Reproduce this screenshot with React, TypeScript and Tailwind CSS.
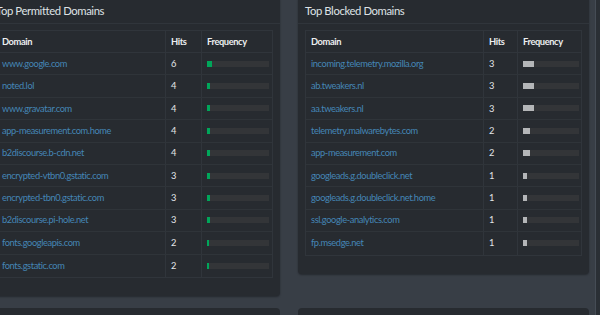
const permitted = [
  { domain: 'www.google.com', hits: 6 },
  { domain: 'noted.lol', hits: 4 },
  { domain: 'www.gravatar.com', hits: 4 },
  { domain: 'app-measurement.com.home', hits: 4 },
  { domain: 'b2discourse.b-cdn.net', hits: 4 },
  { domain: 'encrypted-vtbn0.gstatic.com', hits: 3 },
  { domain: 'encrypted-tbn0.gstatic.com', hits: 3 },
  { domain: 'b2discourse.pi-hole.net', hits: 3 },
  { domain: 'fonts.googleapis.com', hits: 2 },
  { domain: 'fonts.gstatic.com', hits: 2 },
];

const blocked = [
  { domain: 'incoming.telemetry.mozilla.org', hits: 3 },
  { domain: 'ab.tweakers.nl', hits: 3 },
  { domain: 'aa.tweakers.nl', hits: 3 },
  { domain: 'telemetry.malwarebytes.com', hits: 2 },
  { domain: 'app-measurement.com', hits: 2 },
  { domain: 'googleads.g.doubleclick.net', hits: 1 },
  { domain: 'googleads.g.doubleclick.net.home', hits: 1 },
  { domain: 'ssl.google-analytics.com', hits: 1 },
  { domain: 'fp.msedge.net', hits: 1 },
];

type Row = { domain: string; hits: number };

const DomainTable = ({
  title,
  rows,
  cols,
  barClass,
  barWidth,
  scale,
}: {
  title: string;
  rows: Row[];
  cols: string;
  barClass: string;
  barWidth: string;
  scale: number;
}) => {
  return (
    <div className="w-[291px] shrink-0 self-start rounded-[4px] bg-[#272b30] pb-[18px] shadow-[0_1px_2px_rgba(0,0,0,0.35)]">
      <div className="flex h-[28px] items-end border-b border-[#30353b] px-[7px] pb-[5px]">
        <h3 className="text-[11.3px] leading-[14px] tracking-[-0.4px] text-[#dfe2e5]">{title}</h3>
      </div>
      <div className="px-[7px] pt-[6px]">
        <div className="border border-[#30353b] text-[9.3px] tracking-[-0.4px]">
          <div className={`grid ${cols} h-[22px] border-b border-[#30353b] font-bold text-[#eceeef]`}>
            <div className="flex items-center pl-[5px]">Domain</div>
            <div className="flex items-center border-l border-[#30353b] pl-[5px]">Hits</div>
            <div className="flex items-center border-l border-[#30353b] pl-[5px]">Frequency</div>
          </div>
          {rows.map((row, i) => (
            <div
              key={row.domain}
              className={`grid ${cols} h-[22.4px] ${i < rows.length - 1 ? 'border-b' : ''} border-[#2f3439]`}
            >
              <div className="flex items-center pl-[5px] text-[#4586b6]">{row.domain}</div>
              <div className="flex items-center border-l border-[#30353b] pl-[5px] text-[#e4e6e8]">
                {row.hits}
              </div>
              <div className="flex items-center border-l border-[#30353b] pl-[5px]">
                <div className={`h-[6px] ${barWidth} bg-[#333538]`}>
                  <div className={`h-full ${barClass}`} style={{ width: `${row.hits * scale}px` }} />
                </div>
              </div>
            </div>
          ))}
        </div>
      </div>
    </div>
  );
};

export default function App() {
  return (
    <div
      className="relative h-[315px] w-[600px] overflow-hidden bg-[#383e46]"
      style={{ fontFamily: 'Lato, "Noto Sans", sans-serif' }}
    >
      <div className="-ml-[11px] -mt-[4px] flex flex-col gap-[12px]">
        <div className="flex gap-[18px]">
          <DomainTable
            title="Top Permitted Domains"
            rows={permitted}
            cols="grid-cols-[168px_36px_1fr]"
            barClass="bg-[#00a65a]"
            barWidth="w-[62px]"
            scale={0.85}
          />
          <DomainTable
            title="Top Blocked Domains"
            rows={blocked}
            cols="grid-cols-[177px_34px_1fr]"
            barClass="bg-[#b4b6b8]"
            barWidth="w-[56px]"
            scale={3.7}
          />
        </div>
        <div className="flex gap-[18px]">
          <div className="h-[40px] w-[291px] rounded-[4px] bg-[#272b30]" />
          <div className="h-[40px] w-[291px] rounded-[4px] bg-[#272b30]" />
        </div>
      </div>
      <div className="absolute right-0 top-0 h-full w-[5px] border-l border-[#454c55] bg-[#2a2f35]" />
    </div>
  );
}
